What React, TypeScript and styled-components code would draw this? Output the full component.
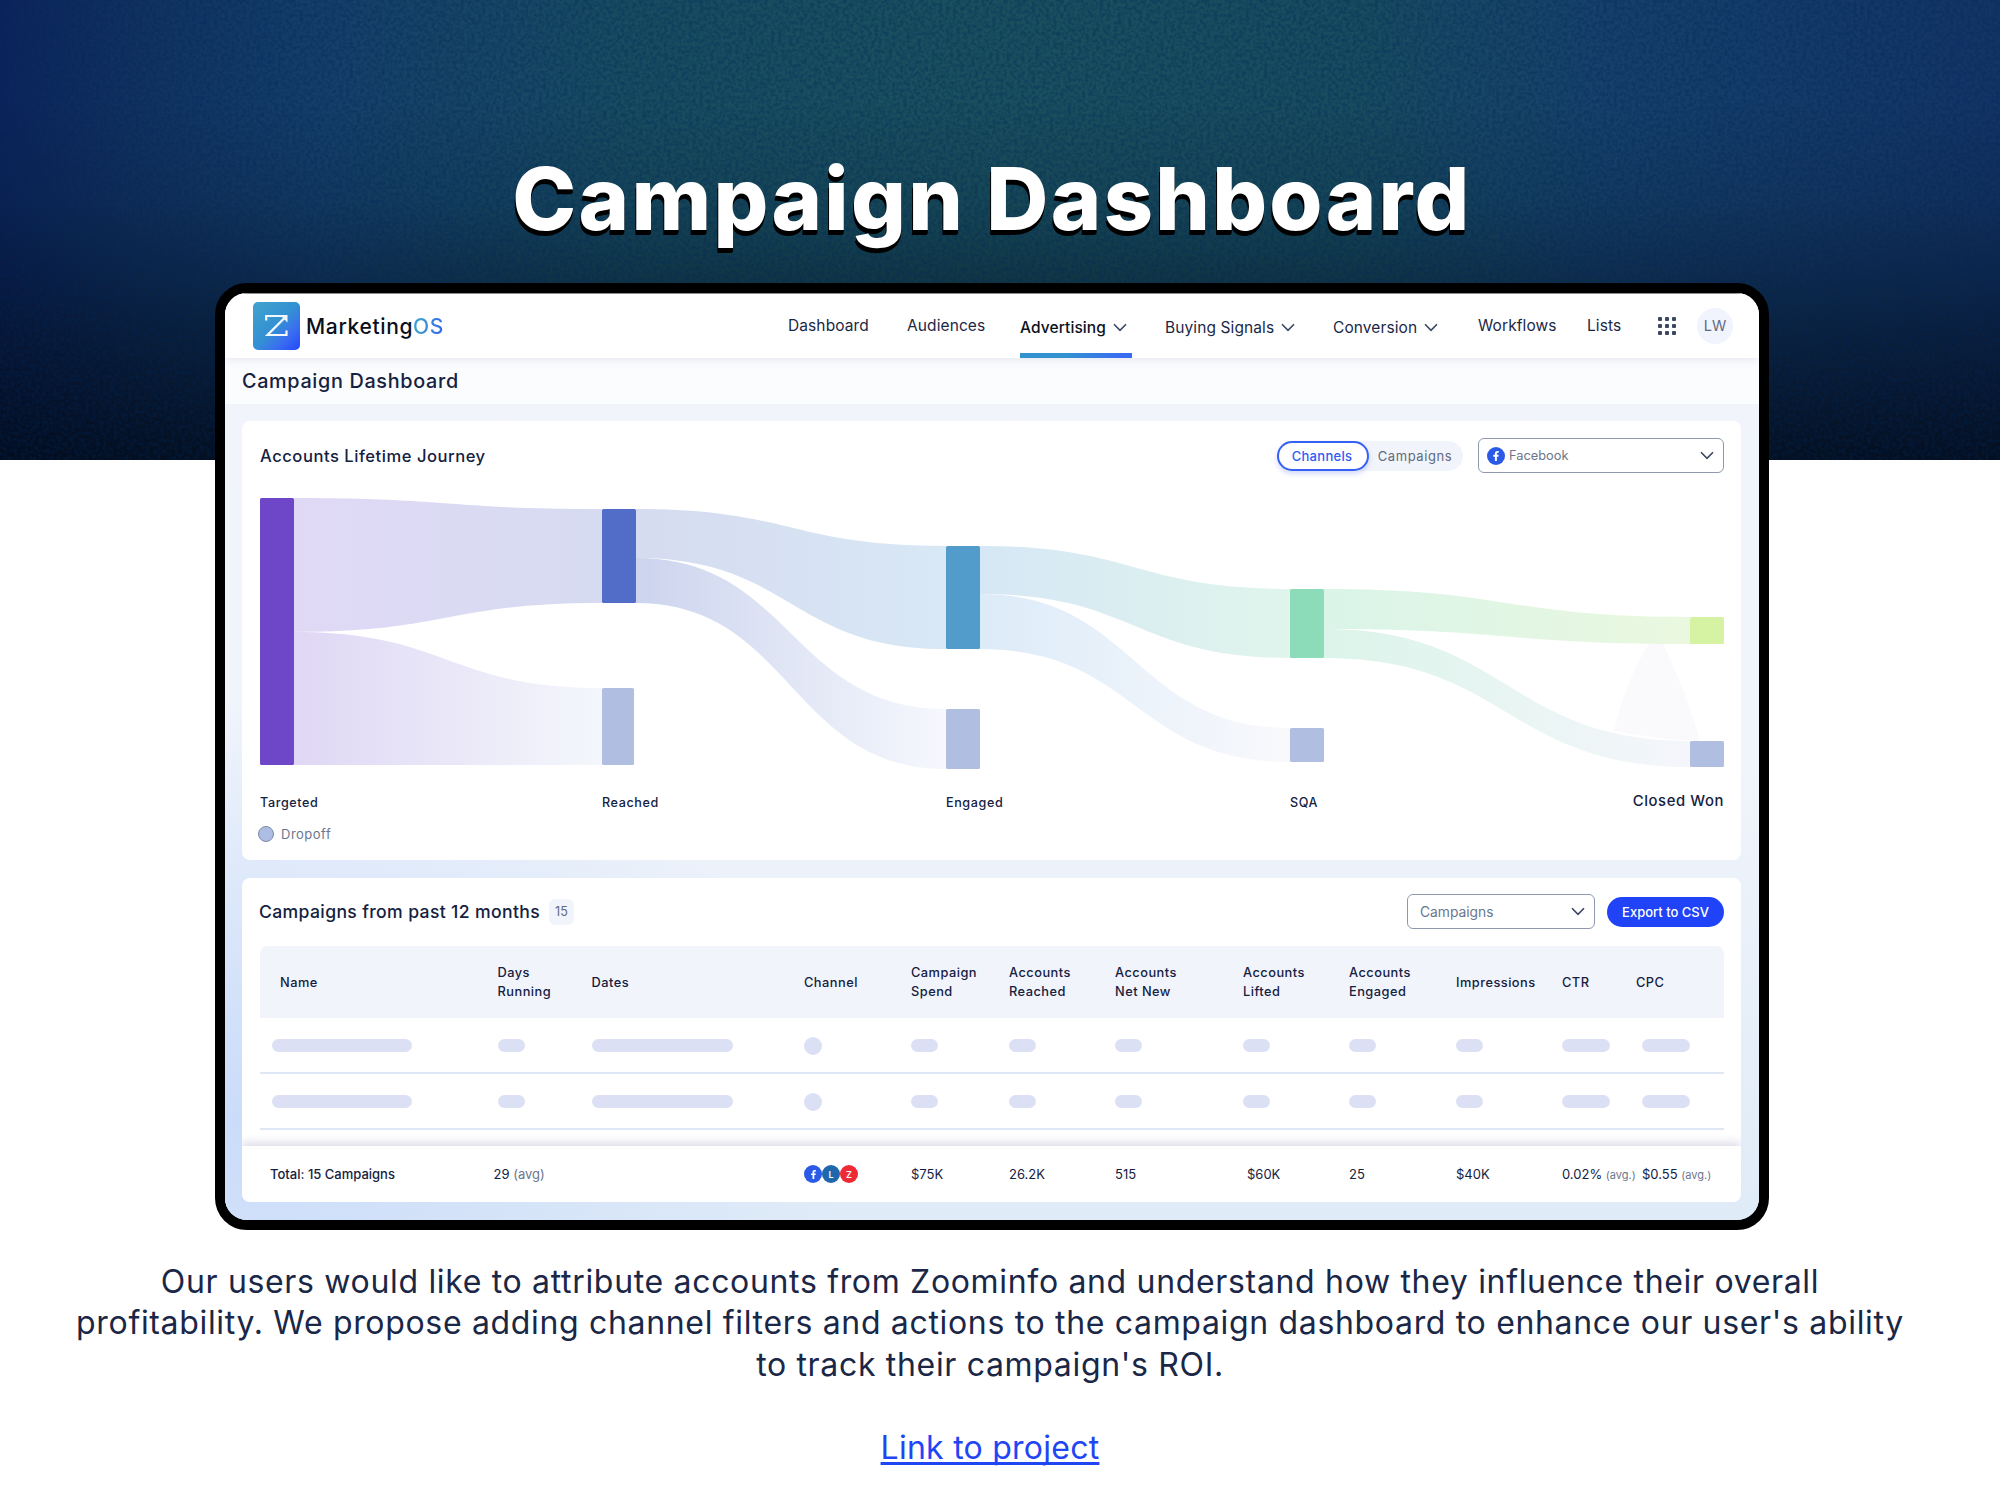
import styled, { createGlobalStyle } from 'styled-components';
import { FaFacebookF } from 'react-icons/fa';

const GlobalStyle = createGlobalStyle`
  *{
    box-sizing: border-box;
  }
  body{
    margin: 0;
    background: white;
    font-family: Inter, "Liberation Sans", sans-serif;
    color: #14213f;
  }
`;

const Page = styled.main`
  position: relative;
  width: 2000px;
  height: 1500px;
  padding-top: 150px;
  overflow: hidden;
  background:
    linear-gradient(180deg, rgba(2, 8, 20, 0) 100px, rgba(2, 8, 20, 0.12) 200px, rgba(2, 8, 20, 0.5) 330px, rgba(2, 8, 20, 0.86) 460px) 0 0 / 100% 460px no-repeat,
    linear-gradient(90deg, #0c245a 0, #113260 7%, #153f6a 16%, #184d60 32%, #1a505e 50%, #184c5f 68%, #16416b 80%, #133465 100%) 0 0 / 100% 460px no-repeat,
    white;
`;

const Grain = styled.svg`
  position: absolute;
  top: 0;
  left: 0;
  width: 2000px;
  height: 460px;
`;

const Title = styled.h1`
  position: relative;
  width: 1980px;
  margin: 0 0 33px;
  padding-left: 4px;
  font-size: 86px;
  line-height: 98px;
  height: 100px;
  font-weight: 800;
  letter-spacing: 2.3px;
  text-align: center;
  color: white;
  text-shadow: 0 2px 0 black, 0 4px 0 black, -1px 5px 0 black;
`;

const Device = styled.section`
  position: relative;
  width: 1554px;
  height: 947px;
  margin-left: 215px;
  border: 10px solid black;
  border-radius: 32px;
  overflow: hidden;
  background: white;
`;

const TopBar = styled.header`
  position: relative;
  display: flex;
  justify-content: space-between;
  height: 65px;
  padding: 0 26px 0 28px;
  border-top: 1px solid #8d8d8d;
  background: white;
  box-shadow: 0 2px 8px rgba(90, 110, 160, 0.13);
  z-index: 1;
`;

const Brand = styled.div`
  display: flex;
  align-items: center;
  gap: 6px;
  height: 64px;
  font-size: 21px;
  font-weight: 500;
  letter-spacing: 0.65px;
  color: #0a0f1c;
  span{
    background: linear-gradient(100deg, #3a9fd0 20%, #3668f0 90%);
    background-clip: text;
    color: transparent;
  }
`;

const Nav = styled.nav`
  display: grid;
  grid-template-columns: 119px 113px 145px 168px 145px 109px 71px 39px 36px;
  align-items: center;
`;

const NavItem = styled.a<{ $active?: boolean; $menu?: boolean }>`
  display: flex;
  align-items: center;
  gap: 7px;
  height: 100%;
  width: ${p => (p.$active ? '112px' : 'max-content')};
  padding-top: ${p => (p.$menu ? '7px' : '4px')};
  font-size: 15.5px;
  font-weight: ${p => (p.$active ? 500 : 400)};
  letter-spacing: 0.1px;
  color: ${p => (p.$active ? '#0c1220' : '#1b2845')};
  white-space: nowrap;
  border-bottom: 5px solid transparent;
  border-image: ${p => (p.$active ? 'linear-gradient(90deg, #3292cf 40%, #3a6cf2 90%) 1' : 'none')};
  border-width: 0 0 5px;
`;

const Avatar = styled.div`
  display: flex;
  align-items: center;
  justify-content: center;
  width: 36px;
  height: 36px;
  margin-top: -1px;
  border-radius: 50%;
  background: #f1f4fc;
  font-size: 14.5px;
  color: #5f6a82;
`;

const SubBar = styled.div`
  height: 46px;
  padding: 8px 0 0 17px;
  background: #fbfcfe;
  font-size: 19.8px;
  line-height: 31px;
  font-weight: 500;
  letter-spacing: 0.68px;
`;

const Content = styled.div`
  display: flex;
  flex-direction: column;
  gap: 18px;
  height: 816px;
  padding: 17px 18px 18px 17px;
  background:
    radial-gradient(ellipse 620px 420px at 0 88%, #cbdcfa 0, rgba(203, 220, 250, 0) 100%),
    linear-gradient(180deg, #f1f4fb 0, #f0f4fb 45%, #dfebf7 100%);
`;

const Card = styled.section`
  position: relative;
  border-radius: 8px;
  background: white;
  overflow: hidden;
`;

const JourneyCard = styled(Card)`
  height: 439px;
  padding: 17px 17px 0 18px;
`;

const TableCard = styled(Card)`
  height: 324px;
`;

const CardHead = styled.div`
  display: flex;
  align-items: center;
  height: 35px;
`;

const CardTitle = styled.h2<{ $size: number; $track: number }>`
  flex: 1;
  display: flex;
  align-items: center;
  gap: 9px;
  margin: 0;
  font-size: ${p => p.$size}px;
  font-weight: 500;
  letter-spacing: ${p => p.$track}px;
`;

const Toggle = styled.div`
  display: flex;
  width: 186px;
  height: 30px;
  margin-right: 15px;
  border-radius: 15px;
  background: #f1f4fa;
`;

const ToggleOption = styled.button<{ $on?: boolean }>`
  width: ${p => (p.$on ? 92 : 94)}px;
  padding: 0 2px 0 0;
  border: ${p => (p.$on ? '2px solid #3560f4' : 'none')};
  border-radius: 15px;
  background: ${p => (p.$on ? 'white' : 'transparent')};
  box-shadow: ${p => (p.$on ? '0 3px 5px rgba(60, 90, 220, 0.22)' : 'none')};
  font: ${p => (p.$on ? 500 : 400)} 13px Inter, sans-serif;
  letter-spacing: ${p => (p.$on ? 0.3 : 0.6)}px;
  color: ${p => (p.$on ? '#2f5bf5' : '#5f6a80')};
`;

const Select = styled.div<{ $width: number; $pad: number; $size: number }>`
  display: flex;
  align-items: center;
  gap: 4px;
  width: ${p => p.$width}px;
  height: 35px;
  padding: 0 9px 0 ${p => p.$pad}px;
  border: 1.5px solid #8f99ad;
  border-radius: 6px;
  font-size: ${p => p.$size}px;
  color: #6b768c;
  > svg:last-child{
    margin-left: auto;
  }
`;

const ChannelDot = styled.span<{ $color: string }>`
  flex-shrink: 0;
  display: inline-flex;
  align-items: center;
  justify-content: center;
  width: 18px;
  height: 18px;
  border-radius: 50%;
  background: ${p => p.$color};
  color: white;
  font-size: 9px;
  font-weight: 600;
`;

const Channels = styled.span`
  display: flex;
`;

const Chart = styled.svg`
  display: block;
  margin-top: 25px;
`;

const Stages = styled.div`
  display: grid;
  grid-template-columns: 342px 344px 344px 1fr auto;
  align-items: center;
  height: 24px;
  margin-top: 20px;
  font-size: 12.6px;
  font-weight: 500;
  letter-spacing: 0.6px;
`;

const LastStage = styled.span`
  margin-top: -3px;
  font-size: 14.8px;
`;

const Legend = styled.div`
  display: flex;
  align-items: center;
  gap: 7px;
  margin-top: 10px;
  margin-left: -2px;
  font-size: 13px;
  line-height: 20px;
  letter-spacing: 0.5px;
  color: #6b768c;
  &::before{
    content: '';
    width: 14px;
    height: 14px;
    border: 1px solid #7d8aa8;
    border-radius: 50%;
    background: #aebde3;
  }
`;

const TableHead = styled(CardHead)`
  padding: 0 17px 0 17px;
  margin-top: 16px;
`;

const Count = styled.span`
  padding: 0 6px;
  border-radius: 6px;
  background: #f1f4fb;
  font-size: 12.5px;
  line-height: 26px;
  font-weight: 400;
  letter-spacing: 0;
  color: #5f6a80;
`;

const ExportButton = styled.button`
  width: 117px;
  height: 30px;
  margin-left: 12px;
  padding: 0;
  border: 0;
  border-radius: 15px;
  background: #2043f8;
  color: white;
  font: 500 13px Inter, sans-serif;
`;

const Row = styled.div`
  display: grid;
  grid-template-columns: 237.5px 94px 212.5px 107px 98px 106px 128px 106px 107px 106px 74px 1fr;
  align-items: center;
  width: 1464px;
  margin-left: 18px;
`;

const HeadRow = styled(Row)`
  height: 72px;
  margin-top: 17px;
  border-radius: 8px 8px 0 0;
  background: #f2f4fc;
  font-size: 12.8px;
  line-height: 19px;
  font-weight: 500;
  letter-spacing: 0.48px;
`;

const SkeletonRow = styled(Row)`
  height: 56px;
  padding-top: 1px;
  border-bottom: 2px solid #dde7f6;
`;

const TotalRow = styled.div`
  position: relative;
  display: flex;
  height: 56px;
  margin-top: 16px;
  background: white;
  box-shadow: 0 -3px 9px rgba(60, 60, 130, 0.2);
  font-size: 13px;
  font-weight: 400;
`;

const Cell = styled.span<{ $shift?: number }>`
  margin-left: ${p => p.$shift ?? 0}px;
  white-space: pre-line;
`;

const TotalCell = styled(Cell)`
  white-space: nowrap;
`;

const Strong = styled.b`
  font-weight: 500;
`;

const Muted = styled.span<{ $size: number }>`
  font-size: ${p => p.$size}px;
  color: #6b768c;
`;

const Bar = styled.span<{ $width: number; $shift?: number }>`
  width: ${p => p.$width}px;
  height: ${p => (p.$width === 18 ? 18 : 13)}px;
  margin-left: ${p => p.$shift ?? 0}px;
  border-radius: 9px;
  background: #dce0f4;
`;

const Intro = styled.p`
  width: 1980px;
  margin: 31px 0 0;
  font-size: 32px;
  line-height: 41.3px;
  letter-spacing: 0.67px;
  text-align: center;
  white-space: nowrap;
  color: #1a2747;
`;

const ProjectLink = styled.a`
  display: block;
  width: 1980px;
  margin-top: 42px;
  font-size: 32px;
  line-height: 41px;
  letter-spacing: 0.25px;
  text-align: center;
  color: #1f45f5;
  text-decoration: underline;
  text-decoration-thickness: 3px;
  text-underline-offset: 3px;
  text-decoration-skip-ink: none;
`;

const Chevron = () => (
  <svg width="14" height="9" viewBox="0 0 14 9" fill="none" stroke="#3c4863" strokeWidth="1.6">
    <path d="M1 1.2 L7 7.4 L13 1.2" />
  </svg>
);

const AppsIcon = () => (
  <svg width="18" height="18" viewBox="0 0 18 18" fill="#3c4863">
    {[0, 7, 14].map(y => [0, 7, 14].map(x => (
      <rect key={`${x}-${y}`} x={x} y={y} width="4" height="4" rx="1" />
    )))}
  </svg>
);

const Logo = () => (
  <svg width="47" height="48" viewBox="0 0 47 48" fill="none">
    <defs>
      <linearGradient id="logo" x1="0" y1="0" x2="1" y2="1">
        <stop offset="0.1" stopColor="#3f9fcd" />
        <stop offset="0.5" stopColor="#3390d3" />
        <stop offset="0.72" stopColor="#3a6ff0" />
        <stop offset="1" stopColor="#2448fb" />
      </linearGradient>
    </defs>
    <rect width="47" height="48" rx="5" fill="url(#logo)" />
    <g stroke="#f3f8ff" strokeWidth="2.2">
      <path d="M13.2 18.5 V14 H30" />
      <path d="M32 15.5 L14.5 33 H33.5 V28.5" />
    </g>
    <path d="M27 13 H34.5 V20.5 Z" fill="#f3f8ff" />
  </svg>
);

type Band = { x: [number, number]; from: [number, number]; to: [number, number]; colors: [string, string] };

const bands: Band[] = [
  { x: [34, 342], from: [0, 134], to: [11, 105], colors: ['#e0d9f6', '#d6dbf1'] },
  { x: [34, 342], from: [134, 267], to: [190, 267], colors: ['#dfd7f5', '#f4f7fb'] },
  { x: [376, 686], from: [11, 60], to: [48, 151], colors: ['#d5dbf0', '#d8e8f5'] },
  { x: [376, 686], from: [60, 105], to: [211, 271], colors: ['#ccd4ee', '#f6f8fd'] },
  { x: [720, 1030], from: [48, 96], to: [91, 160], colors: ['#d6e7f5', '#e0f5ec'] },
  { x: [720, 1030], from: [96, 151], to: [230, 264], colors: ['#dcebf8', '#f9f9fc'] },
  { x: [1064, 1430], from: [91, 131], to: [119, 146], colors: ['#daf4e9', '#eaf8df'] },
  { x: [1064, 1430], from: [131, 160], to: [243, 269], colors: ['#dbf4e9', '#f5f6fc'] },
];

const nodes = [
  { x: 0, y: 0, w: 34, h: 267, color: '#6d47c7' },
  { x: 342, y: 11, w: 34, h: 94, color: '#516dc8' },
  { x: 342, y: 190, w: 32, h: 77, color: '#b0bee2' },
  { x: 686, y: 48, w: 34, h: 103, color: '#529ccb' },
  { x: 686, y: 211, w: 34, h: 60, color: '#b0bee2' },
  { x: 1030, y: 91, w: 34, h: 69, color: '#8cdcba' },
  { x: 1030, y: 230, w: 34, h: 34, color: '#b0bee2' },
  { x: 1430, y: 119, w: 34, h: 27, color: '#d5f3a3' },
  { x: 1430, y: 243, w: 34, h: 26, color: '#b0bee2' },
];

const bandPath = ({ x: [a, b], from, to }: Band) => {
  const m = (a + b) / 2;
  return `M${a} ${from[0]} C${m} ${from[0]} ${m} ${to[0]} ${b} ${to[0]} V${to[1]} C${m} ${to[1]} ${m} ${from[1]} ${a} ${from[1]} Z`;
};

const Sankey = () => (
  <Chart width="1464" height="272" viewBox="0 0 1464 272">
    <defs>
      {bands.map((band, i) => (
        <linearGradient key={i} id={`band${i}`}>
          <stop offset="0" stopColor={band.colors[0]} />
          <stop offset="1" stopColor={band.colors[1]} />
        </linearGradient>
      ))}
    </defs>
    <path d="M1389 146 H1403 C1416 172 1430 208 1440 243 Q1396 241 1354 233 C1362 200 1374 168 1389 146 Z" fill="#fafafc" />
    {bands.map((band, i) => (
      <path key={i} d={bandPath(band)} fill={`url(#band${i})`} />
    ))}
    {nodes.map((n, i) => (
      <rect key={i} x={n.x} y={n.y} width={n.w} height={n.h} rx="1.5" fill={n.color} />
    ))}
  </Chart>
);

const headings = [
  'Name', 'Days\nRunning', 'Dates', 'Channel', 'Campaign\nSpend', 'Accounts\nReached',
  'Accounts\nNet New', 'Accounts\nLifted', 'Accounts\nEngaged', 'Impressions', 'CTR', 'CPC',
];

const skeleton = [140, 27, 141, 18, 27, 27, 27, 27, 27, 27, 48, 48];

const navItems = [
  { label: 'Dashboard' },
  { label: 'Audiences' },
  { label: 'Advertising', menu: true, active: true },
  { label: 'Buying Signals', menu: true },
  { label: 'Conversion', menu: true },
  { label: 'Workflows' },
  { label: 'Lists' },
];

const App = () => {
  return (
    <Page>
      <GlobalStyle />
      <Grain>
        <filter id="grain" x="0" y="0" width="100%" height="100%">
          <feTurbulence type="fractalNoise" baseFrequency="0.28" numOctaves="3" seed="4" />
          <feColorMatrix values="0 0 0 0 0  0 0 0 0 0.02  0 0 0 0 0.1  0 0 0 3 -1.1" />
        </filter>
        <rect width="2000" height="460" filter="url(#grain)" opacity="0.35" />
      </Grain>

      <Title>Campaign Dashboard</Title>

      <Device>
        <TopBar>
          <Brand>
            <Logo />
            <div>Marketing<span>OS</span></div>
          </Brand>
          <Nav>
            {navItems.map(item => (
              <NavItem key={item.label} $menu={item.menu} $active={item.active}>
                {item.label}
                {item.menu && <Chevron />}
              </NavItem>
            ))}
            <AppsIcon />
            <Avatar>LW</Avatar>
          </Nav>
        </TopBar>

        <SubBar>Campaign Dashboard</SubBar>

        <Content>
          <JourneyCard>
            <CardHead>
              <CardTitle $size={16.6} $track={0.52}>Accounts Lifetime Journey</CardTitle>
              <Toggle>
                <ToggleOption $on>Channels</ToggleOption>
                <ToggleOption>Campaigns</ToggleOption>
              </Toggle>
              <Select $width={246} $pad={8} $size={12.8}>
                <ChannelDot $color="#2b5be6"><FaFacebookF size={10} /></ChannelDot>
                <span>Facebook</span>
                <Chevron />
              </Select>
            </CardHead>
            <Sankey />
            <Stages>
              <span>Targeted</span>
              <span>Reached</span>
              <span>Engaged</span>
              <span>SQA</span>
              <LastStage>Closed Won</LastStage>
            </Stages>
            <Legend>Dropoff</Legend>
          </JourneyCard>

          <TableCard>
            <TableHead>
              <CardTitle $size={17.6} $track={0.36}>Campaigns from past 12 months <Count>15</Count></CardTitle>
              <Select $width={188} $pad={12} $size={13.8}>
                <span>Campaigns</span>
                <Chevron />
              </Select>
              <ExportButton>Export to CSV</ExportButton>
            </TableHead>
            <HeadRow>
              {headings.map((text, i) => (
                <Cell key={i} $shift={i === 0 ? 20 : 0}>{text}</Cell>
              ))}
            </HeadRow>
            {[0, 1].map(row => (
              <SkeletonRow key={row}>
                {skeleton.map((width, i) => (
                  <Bar key={i} $width={width} $shift={i === 0 ? 12 : i === 11 ? 6 : 0} />
                ))}
              </SkeletonRow>
            ))}
            <TotalRow>
              <Row>
                <TotalCell $shift={10}><Strong>Total: 15 Campaigns</Strong></TotalCell>
                <TotalCell $shift={-4}>29 <Muted $size={13}>(avg)</Muted></TotalCell>
                <span />
                <Channels>
                  <ChannelDot $color="#2b5be6"><FaFacebookF size={9} /></ChannelDot>
                  <ChannelDot $color="#2067ab">L</ChannelDot>
                  <ChannelDot $color="#ee2b34">Z</ChannelDot>
                </Channels>
                <TotalCell>$75K</TotalCell>
                <TotalCell>26.2K</TotalCell>
                <TotalCell>515</TotalCell>
                <TotalCell $shift={4}>$60K</TotalCell>
                <TotalCell>25</TotalCell>
                <TotalCell>$40K</TotalCell>
                <TotalCell>0.02% <Muted $size={11}>(avg.)</Muted></TotalCell>
                <TotalCell $shift={6}>$0.55 <Muted $size={11}>(avg.)</Muted></TotalCell>
              </Row>
            </TotalRow>
          </TableCard>
        </Content>
      </Device>

      <Intro>
        Our users would like to attribute accounts from Zoominfo and understand how they influence their overall<br />
        profitability. We propose adding channel filters and actions to the campaign dashboard to enhance our user's ability<br />
        to track their campaign's ROI.
      </Intro>
      <ProjectLink>Link to project</ProjectLink>
    </Page>
  );
};

export default App;
